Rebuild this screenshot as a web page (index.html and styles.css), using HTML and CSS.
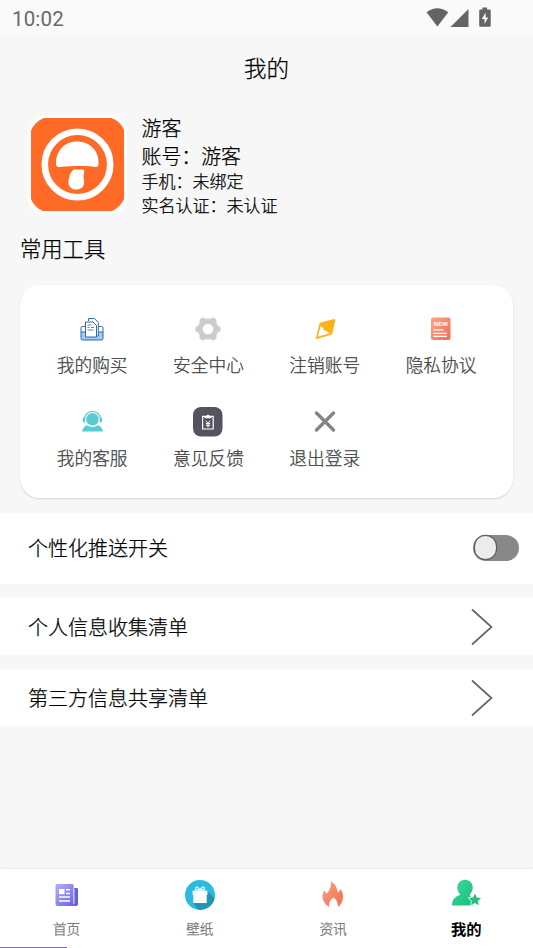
FILE: index.html
```html
<!DOCTYPE html>
<html lang="zh-CN">
<head>
<meta charset="utf-8">
<title>我的</title>
<link rel="stylesheet" href="styles.css">
</head>
<body>
<div class="app">
  <header class="status">
    <span class="time">10:02</span>
    <svg class="signals" width="68" height="22" viewBox="0 0 68 22">
      <path d="M0.5 5.200Q11.300-2.600 22.300 5.200L11.400 19.600Z"/>
      <path d="M42.500 2V20H24.500Z"/>
      <path d="M56.400.4h4.600v2h2.500q1.200 0 1.200 1.200v14.900q0 1.200-1.200 1.200h-9.100q-1.200 0-1.200-1.200V3.600q0-1.200 1.200-1.200h2Z"/>
      <path class="bolt" d="M59.600 5.400v5h2.600l-3.700 6.700v-5h-2.700Z"/>
    </svg>
  </header>
  <h1 class="title">我的</h1>

  <section class="profile">
    <svg class="avatar" width="99" height="99" viewBox="0 0 99 99">
      <rect width="99" height="99" rx="15" fill="#fcfcfc"/>
      <path d="M16 3H83Q92 5.500 96 15V84Q92 92.500 84 96H15Q6.500 92.500 3 84V16Q6.500 6.500 16 3Z" fill="#ff6a26"/>
      <circle cx="49.500" cy="49.500" r="32.700" fill="none" stroke="#fff" stroke-width="6.600"/>
      <path d="M28 49c0-13 8-22.500 21-22.500S71.500 36 70.500 49c0 2-.5 3-3 3-8-1.500-27-1-35 0-3 .5-4.500-.5-4.500-3Z" fill="#fff"/>
      <path d="M46 54.500h8c4 0 1.500 4 1.500 7 1 5 2 12-6 13-6 .5-9.500-3-9-8 .5-4 1.500-10 5.500-12Z" fill="#fff"/>
    </svg>
    <div class="info">
      <p>游客</p>
      <p>账号：游客</p>
      <p class="small">手机：未绑定</p>
      <p class="small">实名认证：未认证</p>
    </div>
  </section>

  <h2 class="heading">常用工具</h2>
  <section class="tools">
    <div class="tool">
      <svg width="30" height="30" viewBox="0 0 30 30" fill="none" stroke="#3568a8" stroke-width="1">
        <path d="M4 18h22v6.500q0 1.500-1.500 1.500h-19Q4 26 4 24.500Z" fill="#9cccf7" stroke="none"/>
        <path d="M4 18v6.500Q4 26 5.500 26h19q1.500 0 1.500-1.500V18M8 12.500H5.500Q4 12.500 4 14v4h4M22 12.500h2.500q1.500 0 1.500 1.500v4h-4"/>
        <path d="M11.500 7V4.500h6l3.800 4V22H9" fill="#fff"/>
        <path d="M8.500 8H16l3.500 3.500V23h-11Z" fill="#fff"/>
        <path d="M10.500 11h4M10.500 13.500h2m1.500 0h3M10.500 16h6" stroke-width=".8"/>
      </svg>
      <span>我的购买</span>
    </div>
    <div class="tool">
      <svg width="30" height="30" viewBox="0 0 30 30">
        <path d="M10 3.800 12.500 5.200h5L20 3.800l3 1.800v3.600l1.500 2.600 2.500 1.400v3.600l-2.500 1.400-1.500 2.600v3.600l-3 1.800-2.500-1.400h-5L10 26.200l-3-1.800v-3.600l-1.500-2.600L3 16.800v-3.600l2.500-1.400L7 9.200V5.600Z" fill="#ccc" stroke="#ccc" stroke-width="1" stroke-linejoin="round"/>
        <circle cx="15" cy="15" r="5.300" fill="#fff"/>
      </svg>
      <span>安全中心</span>
    </div>
    <div class="tool">
      <svg width="30" height="30" viewBox="0 0 30 30">
        <defs><linearGradient id="gold" x1="0" y1="1" x2="1" y2="0"><stop stop-color="#ffb62d"/><stop offset="1" stop-color="#fab00c"/></linearGradient></defs>
        <path d="M10.500 8.500 24.500 5q1 0 .7 1.200L22.500 19q-.3 1.500-2 2L7 25q-1.500.3-1.100-1.300L9.500 9.700q.2-.9 1-1.200Z" fill="url(#gold)"/>
        <path d="M10.500 12.500q3.200.5 3.400 4 3 .2 5.600 3L8 22.500Z" fill="#fff"/>
      </svg>
      <span>注销账号</span>
    </div>
    <div class="tool">
      <svg width="30" height="30" viewBox="0 0 30 30">
        <defs><linearGradient id="coral" x1="0" y1="0" x2="1" y2="1"><stop stop-color="#ffa584"/><stop offset="1" stop-color="#f06c58"/></linearGradient></defs>
        <rect x="5" y="3.500" width="19.500" height="22.500" rx="2" fill="url(#coral)"/>
        <text x="14.800" y="12.300" class="new">NEW</text>
        <path d="M7.500 15.800h10M7.500 19.300h13.500M7.500 22.300h13.500" stroke="#fff" stroke-width="1.300"/>
      </svg>
      <span>隐私协议</span>
    </div>
    <div class="tool">
      <svg width="30" height="30" viewBox="0 0 30 30" fill="#5accd0">
        <circle cx="15.500" cy="12.300" r="6.300"/>
        <path d="M7.300 12.500a8.200 8.200 0 0 1 16.400 0" fill="none" stroke="#5accd0" stroke-width="1.200"/>
        <path d="M8.300 9.500V16q-2.800-.8-2.800-3.300t2.800-3.200Zm14.400 0V16q2.800-.8 2.800-3.300t-2.800-3.200ZM10 18.300q5.500 3.400 11 0 4 1.200 5 6.200H5q1-5 5-6.200Z"/>
      </svg>
      <span>我的客服</span>
    </div>
    <div class="tool">
      <svg width="30" height="30" viewBox="0 0 30 30">
        <rect width="29.500" height="29.500" rx="8" fill="#555362"/>
        <path d="M9.600 9.300h10.600v12.700H9.600Z" fill="none" stroke="#fff" stroke-width="1.200"/>
        <path d="M11.500 11.300v-2l2-.5q1.500-2.200 3 0l2 .5v2Z" fill="#fff"/>
        <path d="m13 13.800 2 2.600 2-2.600M12.800 16.600h4.400M12.800 18.300h4.400M15 16v4.600" fill="none" stroke="#fff" stroke-width="1"/>
      </svg>
      <span>意见反馈</span>
    </div>
    <div class="tool">
      <svg width="30" height="30" viewBox="0 0 30 30">
        <path d="m6.500 6 17 17m0-17-17 17" stroke="#848484" stroke-width="3.400" stroke-linecap="round"/>
      </svg>
      <span>退出登录</span>
    </div>
  </section>

  <section class="rows">
    <div class="row push"><span>个性化推送开关</span><i class="switch"></i></div>
    <div class="row"><span>个人信息收集清单</span>
      <svg class="arrow" width="22" height="38" viewBox="0 0 22 38"><path d="M1 1.500 20.500 19 1 36.500"/></svg></div>
    <div class="row"><span>第三方信息共享清单</span>
      <svg class="arrow" width="22" height="38" viewBox="0 0 22 38"><path d="M1 1.500 20.500 19 1 36.500"/></svg></div>
  </section>

  <nav class="tabs">
    <div class="tab">
      <svg width="32" height="32" viewBox="0 0 32 32">
        <defs><linearGradient id="violet" x1="0" y1="0" x2="1" y2="1"><stop stop-color="#b3b0f8"/><stop offset="1" stop-color="#6860e4"/></linearGradient></defs>
        <path d="M23 9h2.700q1.300 0 1.300 1.300V25q0 2-2 2H22Z" fill="#675ee4"/>
        <path d="M6 5h15.200q1.500 0 1.500 1.500v18.800q0 1 1 1.700H6.500q-2 0-2-2V6.500Q4.500 5 6 5Z" fill="url(#violet)"/>
        <path d="M22.900 9.500v15.500" stroke="#fff" stroke-width=".9"/>
        <path d="M8 10h5.500v5.200H8Z" fill="#fff"/>
        <path d="M15 10.800h4M15 14.500h4M8 18h11M8 22h11" stroke="#fff" stroke-width="1.500"/>
      </svg>
      <span>首页</span>
    </div>
    <div class="tab">
      <svg width="32" height="32" viewBox="0 0 32 32">
        <defs><clipPath id="disc"><circle cx="16" cy="16" r="15"/></clipPath></defs>
        <circle cx="16" cy="16" r="15" fill="#28bce0"/>
        <path d="m23 11.500 12 12v14H20L9 24Z" fill="#2494b4" clip-path="url(#disc)"/>
        <path d="M9.500 11.500h13q1 0 1 1v3.200h-.8V24H9.300v-8.300h-.8v-3.200q0-1 1-1Z" fill="#fff"/>
        <path d="M15.500 11q-4 0-4-1.500c0-2.200 4-1.500 4 1.500Zm1 0q4 0 4-1.500c0-2.200-4-1.500-4 1.500Z" fill="none" stroke="#fff" stroke-width="1.200"/>
      </svg>
      <span>壁纸</span>
    </div>
    <div class="tab">
      <svg width="32" height="32" viewBox="0 0 32 32">
        <defs><linearGradient id="flame" x1="0" y1="0" x2="1" y2="1"><stop stop-color="#ffa27e"/><stop offset="1" stop-color="#f06c52"/></linearGradient></defs>
        <path d="M14 2.500q6 3.500 6.600 11 2.500-.8 2.800-3.500 2.800 3 2.600 8-.2 6-5 10 .2-6.500-4.500-9.500-5.200 3-4.500 9.500Q6 24 5.500 18q0-5 2.300-6.500.3 2.300 2 3Q14.500 10 14 2.500Z" fill="url(#flame)"/>
      </svg>
      <span>资讯</span>
    </div>
    <div class="tab active">
      <svg width="32" height="32" viewBox="0 0 32 32">
        <defs><linearGradient id="mint" x1="0" y1="0" x2="1" y2="1"><stop stop-color="#34e0a0"/><stop offset="1" stop-color="#1fb87b"/></linearGradient></defs>
        <path d="M10.500 15.500C4.500 10 7.500.8 15 .8s10.500 9.200 4.800 14.700l.8 2.500q3 .5 4 3L23 26.500H1.800q.5-8.500 8.700-11Z" fill="url(#mint)"/>
        <path d="m24.900 14.500 1.900 4 4.200.5-3.100 3 .9 4.300-3.900-2.200-3.900 2.200.9-4.300-3.100-3 4.300-.5Z" fill="#22be82" stroke="#fff" stroke-width="1.500" stroke-linejoin="round" paint-order="stroke"/>
      </svg>
      <span>我的</span>
    </div>
  </nav>
</div>
</body>
</html>
```
FILE: styles.css
```css
* { box-sizing: border-box; }
body {
  margin: 0;
  font-family: "Noto Sans CJK SC", sans-serif;
  font-weight: 300;
  -webkit-text-stroke: .25px;
  color: #000;
  background: #f7f7f7;
}
.app { display: flex; flex-direction: column; height: 948px; overflow: hidden; }
svg { display: block; flex: none; }
.status {
  display: flex;
  justify-content: space-between;
  align-items: flex-start;
  height: 36px;
  padding: 7px 39px 0 12px;
  background: #fafafa;
}
.time { font: 400 20.500px/24px Roboto, sans-serif; color: #686868; letter-spacing: .15px; }
.signals { fill: #646464; }
.signals .bolt { fill: #fafafa; }
.title {
  margin: 0;
  height: 78px;
  font-size: 22.500px;
  font-weight: 300;
  line-height: 62px;
  text-align: center;
}
.profile { display: flex; height: 115px; padding-left: 28px; gap: 14.500px; }
.avatar { margin-top: 1px; }
.info p { margin: 0; font-size: 19.900px; line-height: 27.500px; }
.info .small { font-size: 17px; line-height: 24px; }
.heading {
  margin: 0;
  height: 56px;
  padding-left: 20px;
  font-size: 21.300px;
  font-weight: 300;
  line-height: 38px;
}
.tools {
  display: grid;
  grid-template-columns: repeat(4, 116.300px);
  grid-template-rows: repeat(2, 92.500px);
  height: 213px;
  margin: 0 20px;
  padding: 29px 0 0 14px;
  border-radius: 20px;
  background: #fff;
  box-shadow: 0 1px 2px rgba(0, 0, 0, .14);
}
.tool { display: flex; flex-direction: column; align-items: center; gap: 6px; }
.tool span { font-size: 17.700px; line-height: 29px; color: #404040; }
.new { font: 700 6px "Liberation Sans", sans-serif; fill: #fff; text-anchor: middle; -webkit-text-stroke: 0; }
.rows { display: flex; flex-direction: column; gap: 14px; margin-top: 15px; }
.row {
  display: flex;
  align-items: center;
  justify-content: space-between;
  height: 57px;
  padding: 0 40px 0 28px;
  background: #fff;
  font-size: 20px;
}
.push { height: 71px; padding-right: 14px; padding-bottom: 2px; }
.switch {
  display: flex;
  width: 46px;
  height: 26px;
  padding: 1.500px;
  border-radius: 13px;
  background: #888;
}
.switch::before {
  content: "";
  width: 21.500px;
  height: 23px;
  border-radius: 11px;
  background: #ececec;
  box-shadow: 0 0 0 1.200px #606060;
}
.row:not(.push) span { margin-top: -1px; }
.arrow { fill: none; stroke: #666; stroke-width: 1.700; }
.tabs {
  display: grid;
  grid-template-columns: repeat(4, 1fr);
  height: 79px;
  margin-top: auto;
  padding-top: 10px;
  background: linear-gradient(#8068bd, #8068bd) 0 100% / 67px 1px no-repeat, #fff;
  box-shadow: 0 -1px 2px rgba(0, 0, 0, .06);
}
.tab { display: flex; flex-direction: column; align-items: center; gap: 6px; }
.tab span { font-size: 13.700px; line-height: 22px; color: #707070; }
.tab.active span { font-size: 15.300px; font-weight: 700; color: #000; -webkit-text-stroke: 0; }
.time { -webkit-text-stroke: 0; }
```
